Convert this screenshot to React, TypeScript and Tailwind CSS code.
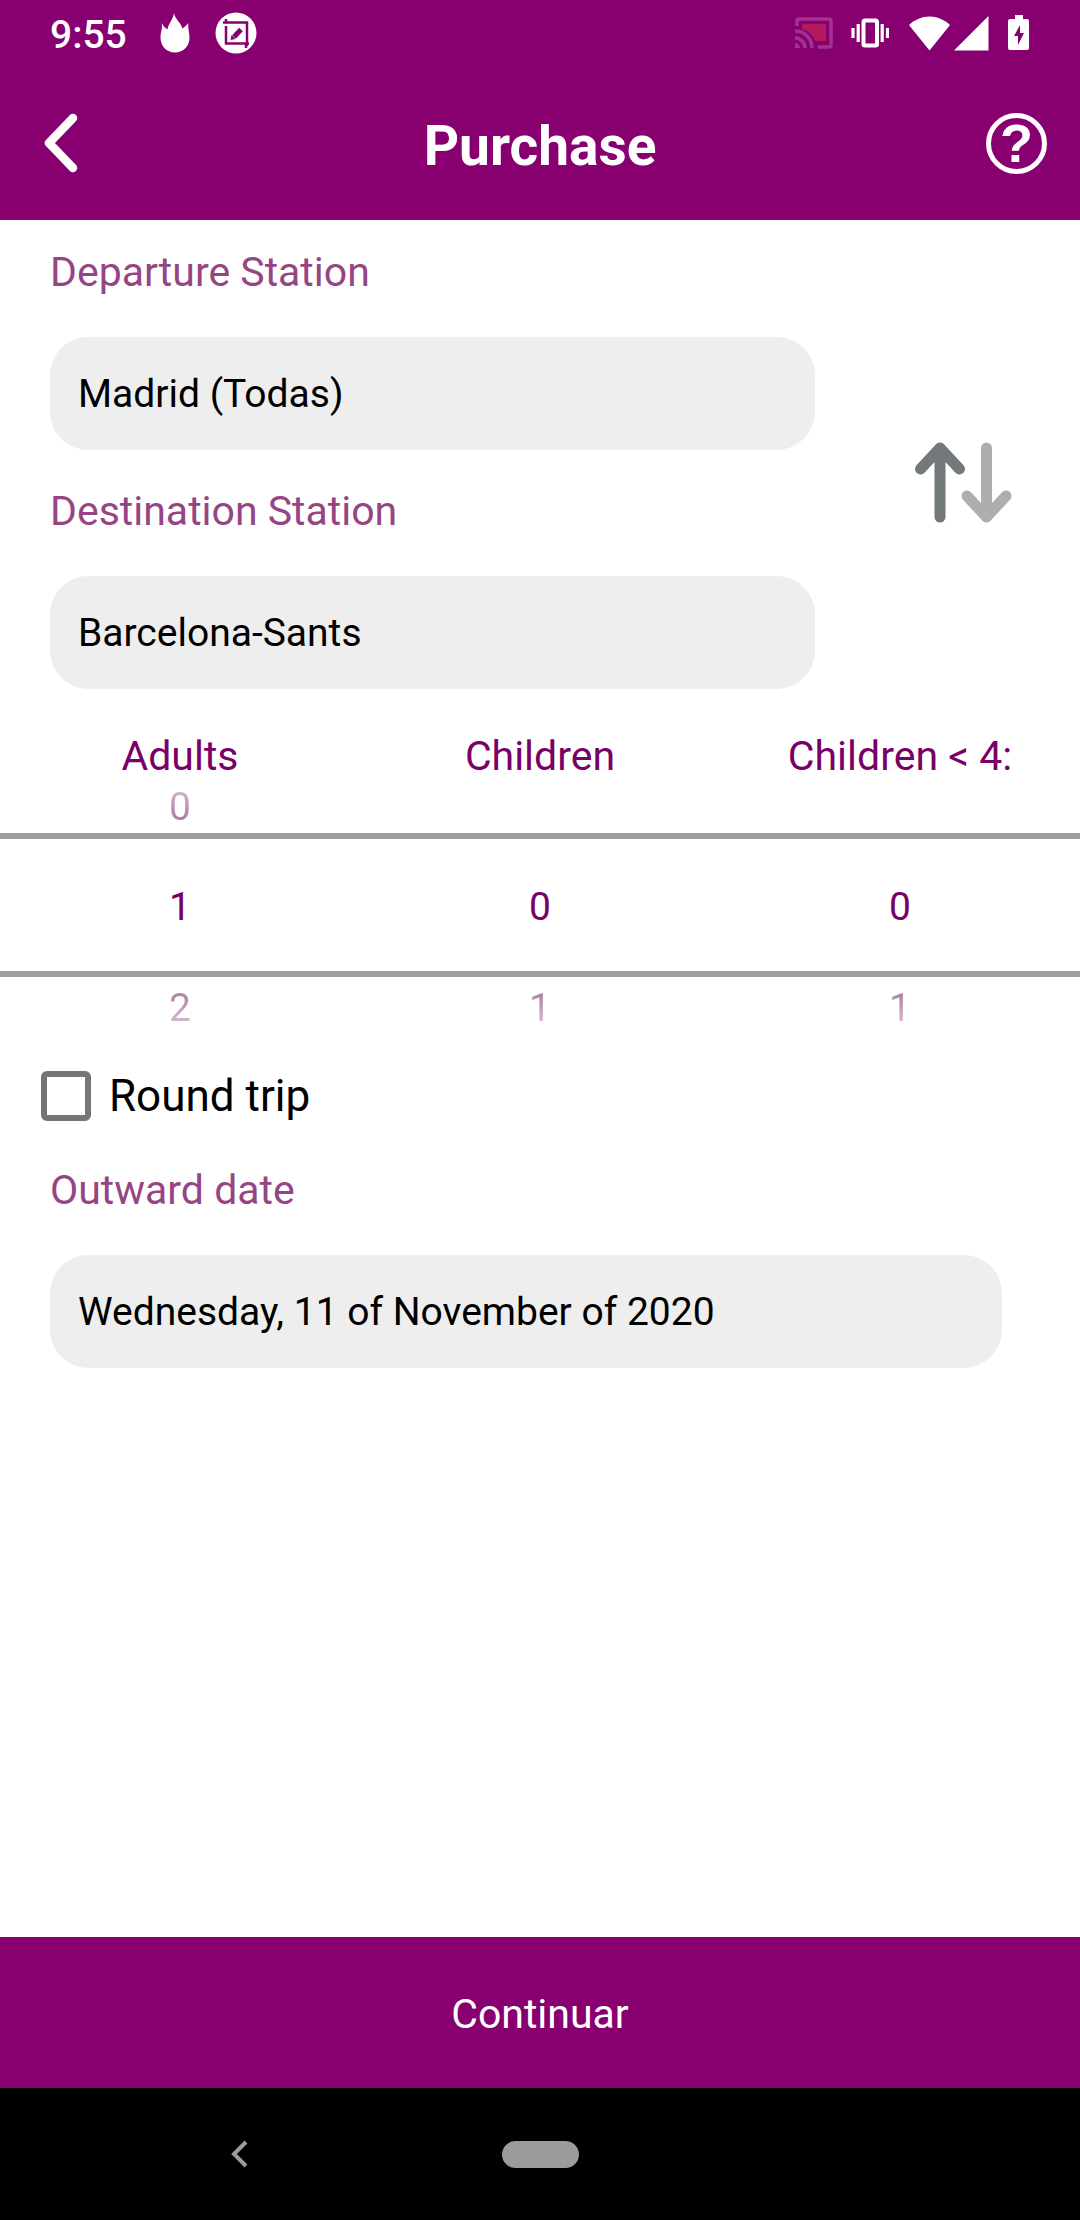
import { useState } from "react";

const COUNTERS = ["Adults", "Children", "Children < 4:"];

function StatusBar() {
  return (
    <div className="flex h-[66px] items-center justify-between px-[50px]">
      <div className="flex items-center">
        <span className="pt-1 text-[39px] font-medium leading-[46px]">9:55</span>
        <svg className="ml-[33px] h-[40px] w-[30px]" viewBox="0 0 30 40" fill="currentColor">
          <path d="M14 0c.5 5.500 6.500 9 8.500 15.500C24 14.500 26.500 12.500 28.500 10c-1 5 1 9 1 14.500C29.500 33 23.500 39.500 15 39.500S.5 33 .5 24.500C.5 19 3 15 1.500 10c1.500 2.500 3.500 5 6 6.500C8 11 13 7 14 0z" />
        </svg>
        <svg className="ml-[25px] size-[42px]" viewBox="0 0 42 42">
          <circle cx="21" cy="21" r="20.500" fill="currentColor" />
          <g fill="none" stroke="#880070" strokeWidth="2.500">
            <path d="M8 10.500h24V34M11 14v17.500h23M11 7v4M31 32v4" />
            <path d="M19 25l7-7.500" strokeWidth="5" />
          </g>
          <path d="M15.500 28l1-5 4 4z" fill="#880070" />
        </svg>
      </div>

      <div className="flex items-center">
        <svg className="h-[32px] w-[38px]" viewBox="0 0 38 32" fill="none">
          <path d="M7 7h24v17H20A19 19 0 0 0 7 12z" fill="#b01a5c" />
          <g stroke="#a0338f" strokeWidth="3.500">
            <path d="M2 9V4a2 2 0 0 1 2-2h30a2 2 0 0 1 2 2v24a2 2 0 0 1-2 2H23" />
            <path d="M0 14a17 17 0 0 1 17 17M0 21a10 10 0 0 1 10 10" />
          </g>
          <path d="M0 26a5 5 0 0 1 5 5H0z" fill="#a0338f" />
        </svg>
        <svg className="ml-[18px] h-[30px] w-[38px]" viewBox="0 0 38 30" fill="none" stroke="currentColor">
          <rect x="12.500" y="2.500" width="13.500" height="25" rx="1.500" strokeWidth="4" />
          <path d="M7.200 6v18M31.200 6v18M2 10v10M36.500 10v10" strokeWidth="3.200" />
        </svg>
        <svg className="ml-[20px] h-[35px] w-[41px]" viewBox="0 0 41 35" fill="currentColor">
          <path d="M20.500 34.500L0 9C6 3.500 13 .5 20.500 .5S35 3.500 41 9z" />
        </svg>
        <svg className="ml-[4px] size-[35px]" viewBox="0 0 35 35" fill="currentColor">
          <path d="M34.500 0v34.500H0z" />
        </svg>
        <svg className="ml-[19px] h-[36px] w-[22px]" viewBox="0 0 22 36">
          <path
            d="M7 0h8v4h4a2 2 0 0 1 2 2v27a2 2 0 0 1-2 2H2a2 2 0 0 1-2-2V6a2 2 0 0 1 2-2h5z"
            fill="currentColor"
          />
          <path d="M12 10v8h4l-6 12v-9H6z" fill="#880070" />
        </svg>
      </div>
    </div>
  );
}

function Field({ id, label, value }: { id: string; label: string; value: string }) {
  return (
    <div className="flex flex-col gap-[41px]">
      <label htmlFor={id} className="text-[41px] leading-[48px] text-[#954584]">
        {label}
      </label>
      <input
        id={id}
        readOnly
        value={value}
        className="h-[113px] w-full rounded-[38px] bg-[#eeeeee] px-[28px] text-[39px] text-black outline-none"
      />
    </div>
  );
}

function Counter({
  label,
  value,
  onChange,
}: {
  label: string;
  value: number;
  onChange: (v: number) => void;
}) {
  return (
    <div className="flex flex-col text-center text-[39px] leading-[46px] text-[#780066]">
      <span className="text-[41px] leading-[48px]">{label}</span>
      <button
        type="button"
        disabled={value === 0}
        onClick={() => onChange(value - 1)}
        className="h-[53px] bg-gradient-to-b from-[#e0c8dc] to-[#9c6490] bg-clip-text text-transparent"
      >
        {value > 0 ? value - 1 : ""}
      </button>
      <output className="border-y-[6px] border-[#9e9e9e] pb-[41px] pt-[45px]">{value}</output>
      <button
        type="button"
        onClick={() => onChange(value + 1)}
        className="bg-gradient-to-b from-[#9c6490] to-[#e0c8dc] bg-clip-text pt-[8px] text-transparent"
      >
        {value + 1}
      </button>
    </div>
  );
}

export default function App() {
  const [from, setFrom] = useState("Madrid (Todas)");
  const [to, setTo] = useState("Barcelona-Sants");
  const [counts, setCounts] = useState([1, 0, 0]);
  const [roundTrip, setRoundTrip] = useState(false);

  const swap = () => {
    setFrom(to);
    setTo(from);
  };

  return (
    <div className="flex min-h-screen flex-col bg-white font-[Roboto,sans-serif]">
      <header className="bg-[#880070] text-white">
        <StatusBar />
        <div className="grid h-[154px] grid-cols-[1fr_auto_1fr] items-center px-[33px]">
          <button type="button" aria-label="Back" className="justify-self-start pl-[11px]">
            <svg className="h-[60px] w-[34px]" viewBox="0 0 34 60" fill="none" stroke="currentColor">
              <path d="M29 5L5 30l24 25" strokeWidth="8.500" strokeLinecap="round" strokeLinejoin="round" />
            </svg>
          </button>
          <h1 className="pt-[6px] text-[55px] font-bold leading-[64px]">Purchase</h1>
          <button
            type="button"
            aria-label="Help"
            className="flex size-[61px] items-center justify-center justify-self-end rounded-full border-[5px] border-white font-['Liberation_Sans',sans-serif] text-[54px] font-bold leading-none"
          >
            ?
          </button>
        </div>
      </header>

      <main className="flex-1">
        <section className="flex items-center pt-[28px]">
          <div className="flex flex-1 flex-col gap-[37px] pl-[50px]">
            <Field id="from" label="Departure Station" value={from} />
            <Field id="to" label="Destination Station" value={to} />
          </div>
          <div className="flex w-[265px] justify-center pl-[32px] pt-[28px]">
            <button type="button" aria-label="Swap stations" onClick={swap}>
              <svg
                className="h-[81px] w-[97px]"
                viewBox="0 0 97 81"
                fill="none"
                strokeWidth="11"
                strokeLinecap="round"
                strokeLinejoin="round"
              >
                <path d="M25 75V6M5.500 27L25 6l19.500 21" stroke="#73787b" />
                <path d="M25 6L15 17h20z" fill="#73787b" stroke="none" />
                <path d="M71.500 6v69M52 54l19.500 21L91 54" stroke="#adaeaf" />
                <path d="M71.500 75L61 64h21z" fill="#adaeaf" stroke="none" />
              </svg>
            </button>
          </div>
        </section>

        <section className="mt-[43px] grid grid-cols-3">
          {COUNTERS.map((label, i) => (
            <Counter
              key={label}
              label={label}
              value={counts[i]}
              onChange={(v) => setCounts(counts.map((c, j) => (j === i ? v : c)))}
            />
          ))}
        </section>

        <label className="ml-[41px] mt-[39px] flex w-fit items-center gap-[18px] text-[44px] leading-[52px] text-black">
          <input
            type="checkbox"
            checked={roundTrip}
            onChange={(e) => setRoundTrip(e.target.checked)}
            className="size-[50px] appearance-none rounded-[6px] border-[6px] border-[#757575] checked:bg-[#880070]"
          />
          Round trip
        </label>

        <div className="mt-[44px] pl-[50px] pr-[78px]">
          <Field id="date" label="Outward date" value="Wednesday, 11 of November of 2020" />
        </div>
      </main>

      <button type="button" className="h-[151px] w-full bg-[#880070] pt-[3px] text-[41px] leading-[48px] text-white">
        Continuar
      </button>

      <nav className="grid h-[132px] grid-cols-3 items-center bg-black">
        <button type="button" aria-label="System back" className="ml-[118px] justify-self-center">
          <svg className="h-[28px] w-[18px]" viewBox="0 0 18 28" fill="none" stroke="#9b9b9b">
            <path d="M16 2L4 14l12 12" strokeWidth="4" />
          </svg>
        </button>
        <button
          type="button"
          aria-label="Home"
          className="h-[27px] w-[77px] justify-self-center rounded-full bg-[#9b9b9b]"
        />
      </nav>
    </div>
  );
}
